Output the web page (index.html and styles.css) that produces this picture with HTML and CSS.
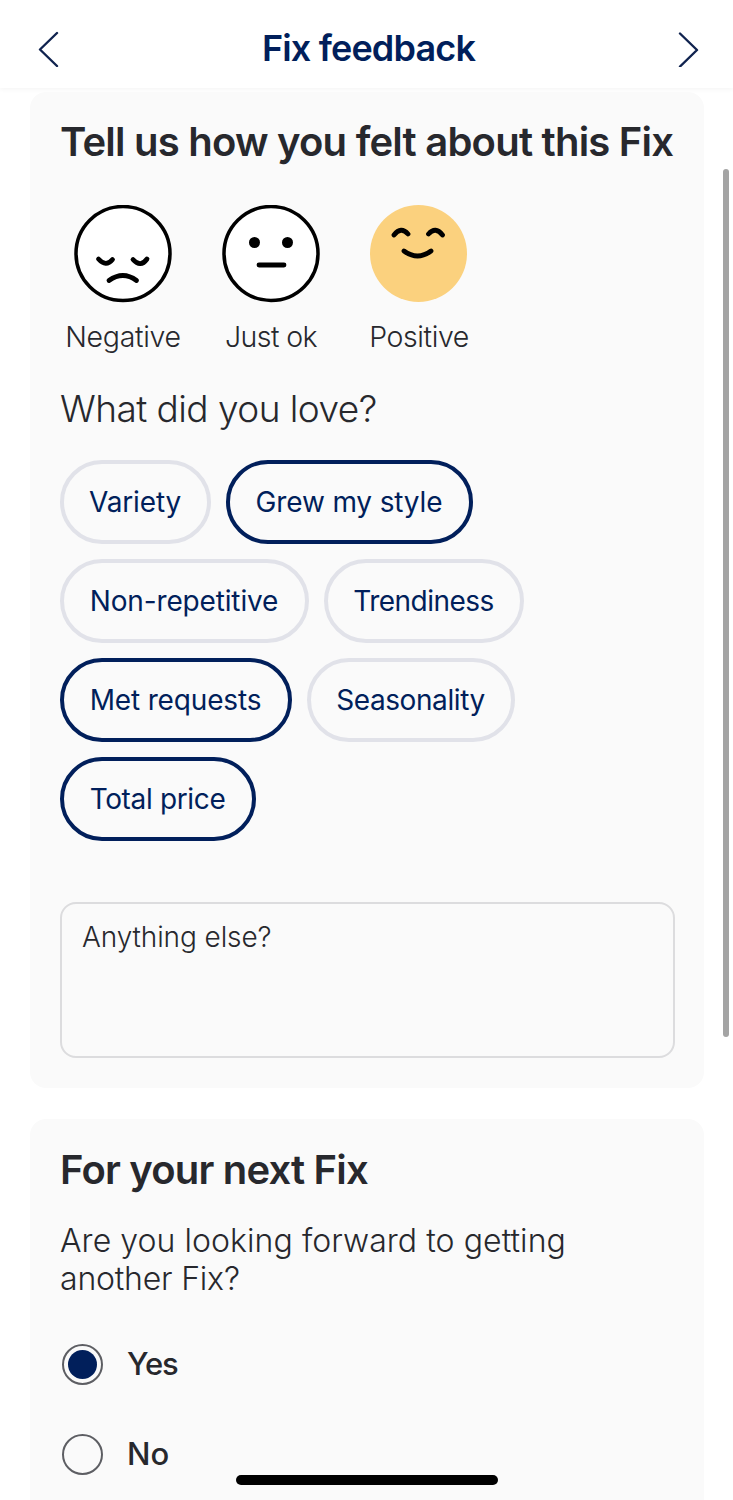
FILE: index.html
```html
<!DOCTYPE html>
<html lang="en">
<head>
<meta charset="utf-8">
<title>Fix feedback</title>
<link rel="stylesheet" href="styles.css">
</head>
<body>
<div class="screen">
  <header class="topbar">
    <svg class="chevron" width="22" height="36" viewBox="0 0 22 36"><path d="M20 2 3 18.500 20 35"/></svg>
    <h1 class="topbar-title">Fix feedback</h1>
    <svg class="chevron" width="22" height="36" viewBox="0 0 22 36"><path d="M2 2.500 19 19 2 35.500"/></svg>
  </header>
  <main class="content">
    <section class="card">
      <h2 class="heading heading-felt">Tell us how you felt about this Fix</h2>
      <div class="faces">
        <div class="face">
          <svg width="98" height="98" viewBox="0 0 98 98"><circle class="ring" cx="49" cy="48.500" r="47"/><path class="stroke" d="M24.500 54q7.500 8.500 14 .5M59 54.500q7.500 8.500 14-.5M35 75.500q14-10 27.500 0"/></svg>
          <span class="face-label l-neg">Negative</span>
        </div>
        <div class="face">
          <svg width="98" height="98" viewBox="0 0 98 98"><circle class="ring" cx="49" cy="48.500" r="47"/><circle cx="32.500" cy="37.500" r="5.500"/><circle cx="65.500" cy="37.500" r="5.500"/><path class="stroke" d="M37 60h25"/></svg>
          <span class="face-label l-ok">Just ok</span>
        </div>
        <div class="face">
          <svg width="98" height="98" viewBox="0 0 98 98"><circle class="sun" cx="48.500" cy="48.500" r="48.500"/><path class="stroke" d="M24 30q7-9 14-1M58.500 29q7-8 14 1M34 46q13.500 10 27 0"/></svg>
          <span class="face-label l-pos">Positive</span>
        </div>
      </div>
      <p class="love">What did you love?</p>
      <div class="chips">
        <button class="chip c-variety">Variety</button>
        <button class="chip c-grew on">Grew my style</button>
        <button class="chip c-nonrep">Non-repetitive</button>
        <button class="chip c-trend">Trendiness</button>
        <button class="chip c-met on">Met requests</button>
        <button class="chip c-season">Seasonality</button>
        <button class="chip c-total on">Total price</button>
      </div>
      <div class="note">Anything else?</div>
    </section>
    <section class="card card-next">
      <h2 class="heading heading-next">For your next Fix</h2>
      <p class="question"><span class="q1">Are you looking forward to getting</span><br><span class="q2">another Fix?</span></p>
      <div class="option"><span class="radio checked"></span><span class="option-label o-yes">Yes</span></div>
      <div class="option"><span class="radio"></span><span class="option-label">No</span></div>
    </section>
  </main>
  <div class="scrollbar"></div>
  <div class="home"></div>
</div>
</body>
</html>
```
FILE: styles.css
```css
* { box-sizing: border-box; }
body { margin: 0; background: #fff; font-family: Inter, "Liberation Sans", sans-serif; color: #27282d; }
.screen { position: relative; height: 1500px; overflow: hidden; }
.topbar { height: 88px; padding: 9px 33px 0 37px; display: flex; align-items: center; justify-content: space-between; box-shadow: 0 1px 5px rgba(0,0,0,.05); }
.topbar-title { margin: -2px 0 0; font-size: 36px; line-height: 44px; font-weight: 600; color: #011f5b; letter-spacing: -.85px; }
.chevron { fill: none; stroke: #10234f; stroke-width: 2.4; stroke-linecap: round; stroke-linejoin: round; }
.content { padding: 4px 29px 0 30px; }
.card { height: 996px; padding: 26px 29px 0 30px; background: #fafafa; border-radius: 16px; }
.card-next { margin-top: 31px; height: 400px; }
.heading { margin: 0; font-size: 40px; line-height: 48px; font-weight: 600; white-space: nowrap; }
.heading-felt { letter-spacing: -.78px; }
.heading-next { padding-top: 1px; letter-spacing: -.82px; }
.faces { display: flex; gap: 50px; margin: 39px 0 0 14px; }
.face { width: 98px; display: flex; flex-direction: column; align-items: center; }
.face-label { margin-top: 16px; font-size: 28.500px; line-height: 36px; font-weight: 300; white-space: nowrap; letter-spacing: -.3px; }
.l-ok { letter-spacing: -.6px; }
.l-pos { letter-spacing: -.4px; }
.ring { fill: #fff; stroke: #000; stroke-width: 3.500; }
.sun { fill: #fbd17e; }
.stroke { fill: none; stroke: #000; stroke-width: 4.800; stroke-linecap: round; }
.love { margin: 31px 0 0; font-size: 37px; line-height: 46px; font-weight: 300; white-space: nowrap; letter-spacing: -.55px; }
.chips { margin-top: 28px; display: flex; flex-wrap: wrap; gap: 15px; width: 490px; }
.chip { height: 84px; padding: 0 1px 1px 0; border: 4px solid #e1e2e9; border-radius: 42px; background: transparent; font: 400 28px/36px Inter, sans-serif; letter-spacing: -.15px; color: #011f5b; white-space: nowrap; }
.chip.on { border-color: #011f5b; }
.c-variety { width: 151px; }
.c-grew { width: 247px; }
.c-nonrep { width: 249px; }
.c-trend { width: 200px; letter-spacing: -.55px; }
.c-met { width: 232px; }
.c-season { width: 208px; letter-spacing: -.4px; }
.c-total { width: 196px; letter-spacing: -.35px; }
.note { margin-top: 61px; height: 156px; padding: 15px 20px; border: 2px solid #dcdcde; border-radius: 16px; font-size: 28px; line-height: 36px; font-weight: 300; letter-spacing: -.1px; }
.question { margin: 28px 0 47px; font-size: 32px; line-height: 37.500px; font-weight: 300; white-space: nowrap; }
.q1 { letter-spacing: .06px; }
.q2 { letter-spacing: -.2px; }
.option { display: flex; align-items: center; gap: 24px; height: 41px; margin: 0 0 49px 2px; font-size: 31px; font-weight: 500; }
.option-label { padding-bottom: 2px; }
.o-yes { letter-spacing: -1px; }
.radio { width: 41px; height: 41px; border: 2px solid #5d5e63; border-radius: 50%; display: flex; align-items: center; justify-content: center; }
.checked::after { content: ""; width: 29px; height: 29px; border-radius: 50%; background: #011f5b; }
.scrollbar { position: absolute; left: 723px; top: 169px; width: 6px; height: 868px; border-radius: 3px; background: #a4a4a4; }
.home { position: absolute; left: 236px; top: 1475px; width: 262px; height: 10px; border-radius: 5px; background: #000; }
```
